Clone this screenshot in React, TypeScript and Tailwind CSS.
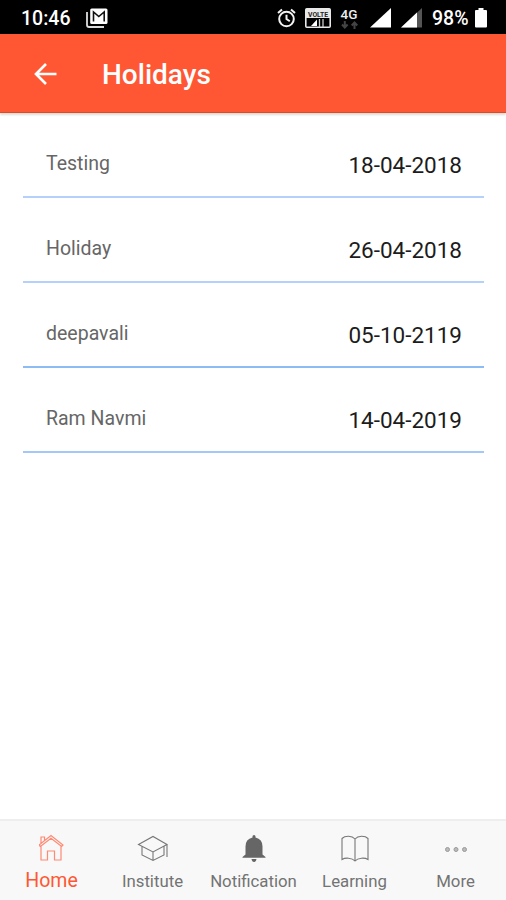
import React from 'react';

type Holiday = {
  name: string;
  date: string;
  line: string;
};

const holidays: Holiday[] = [
  { name: 'Testing', date: '18-04-2018', line: 'border-[#b5d0fa]' },
  { name: 'Holiday', date: '26-04-2018', line: 'border-[#b5d0fa]' },
  { name: 'deepavali', date: '05-10-2119', line: 'border-[#8dbcf5]' },
  { name: 'Ram Navmi', date: '14-04-2019', line: 'border-[#a3c8f8]' },
];

const StatusBar = () => {
  return (
    <div className="flex h-[34px] shrink-0 items-center bg-black pl-[21px] pr-[19px] pt-[1px] text-white">
      <span className="w-[65px] pt-[3px] text-[19.5px] font-medium leading-none">10:46</span>
      <svg className="h-[20px] w-[22px]" viewBox="0 0 22 20" fill="none">
        <path d="M1 4v13q0 2 2 2h15" stroke="#ddd" strokeWidth="1.8" />
        <rect x="4.2" y=".5" width="17.3" height="15.5" rx="1.5" fill="#fff" />
        <path d="M7.5 13.5V4l5.3 4.5L18.2 4v9.5" stroke="#111" strokeWidth="1.6" />
        <path d="M8.5 3h8.5l-4.2 3.2z" fill="#fff" />
      </svg>
      <div className="grow" />
      <svg className="mr-[9px] h-[20px] w-[19px]" viewBox="0 0 19 20" fill="none" stroke="#f3f3f3" strokeWidth="2">
        <circle cx="9.5" cy="11" r="7.3" />
        <path d="M9.5 6.7V11l3.3 2.3M1 5l4-3.5M18 5l-4-3.5" />
      </svg>
      <svg className="mr-[9px] h-[20px] w-[26px]" viewBox="0 0 26 20">
        <rect x=".8" y=".8" width="24.4" height="18.4" rx="1" fill="#000" stroke="#e8e8e8" strokeWidth="1.6" />
        <rect x="1" y="1" width="24" height="9" fill="#e8e8e8" />
        <text x="13" y="8.7" textAnchor="middle" fontSize="8" fontWeight="700" textLength="20" lengthAdjust="spacingAndGlyphs" fill="#222" fontFamily="Roboto">VOLTE</text>
        <path d="M6 18l6-6.5V18z" fill="#fff" />
        <path d="M14.5 11v8M18 11v8" stroke="#ccc" strokeWidth="1.3" />
      </svg>
      <div className="mr-[12px] flex h-[22px] w-[18px] flex-col items-center">
        <span className="text-[13.5px] font-medium leading-[14px] text-[#eee]">4G</span>
        <svg className="h-[8px] w-[17px]" viewBox="0 0 17 8">
          <path d="M3.8 0v6M1 3.5l2.8 3 2.8-3M13.5 8V2M10.7 4.5l2.8-3 2.8 3" stroke="#444" strokeWidth="2" fill="none" />
        </svg>
      </div>
      <svg className="mr-[10px] h-[20px] w-[21px]" viewBox="0 0 21 20">
        <path d="M0 19.5L21 0v19.5z" fill="#fff" />
      </svg>
      <svg className="mr-[10px] h-[20px] w-[21px]" viewBox="0 0 21 20">
        <path d="M0 19.5L21 0v19.5z" fill="#555" />
        <path d="M0 19.5L16 4.6v14.9z" fill="#fff" />
      </svg>
      <span className="w-[43px] pt-[3px] text-[19.5px] font-medium leading-none">98%</span>
      <svg className="h-[20px] w-[12px]" viewBox="0 0 12 20">
        <path d="M3.5 0h5v2H11q1 0 1 1v15.5q0 1-1 1H1q-1 0-1-1V3q0-1 1-1h2.5z" fill="#fff" />
      </svg>
    </div>
  );
};

const Header = () => {
  return (
    <header className="flex h-[79px] shrink-0 items-center border-b border-[#e04a22] bg-[#ff5733] pl-[34px] pt-[2px] text-white shadow-[0_2px_2px_rgba(0,0,0,0.14)]">
      <svg className="h-[22px] w-[23px]" viewBox="0 0 23 22" fill="none" stroke="currentColor" strokeWidth="2.6">
        <path d="M22.5 11H2.5M12 1L2 11l10 10" />
      </svg>
      <h1 className="ml-[45px] pt-[1px] text-[28px] font-medium leading-none">Holidays</h1>
    </header>
  );
};

const HolidayRow = ({ name, date, line }: Holiday) => {
  return (
    <li className={`flex h-[85px] items-center justify-between border-b-2 pl-[23px] pr-[22px] pt-[22px] ${line}`}>
      <span className="mb-[4px] text-[19.5px] text-[#666]">{name}</span>
      <span className="text-[22.5px] text-[#1c1c1c]">{date}</span>
    </li>
  );
};

const HomeIcon = () => (
  <svg className="h-[28px] w-[26px]" viewBox="0 0 26 28" fill="none" stroke="#ff8a74" strokeWidth="1.2">
    <path d="M0 11L12 1.5 24 11l-1.4 1.5L12 4.3 1.4 12.5zM2 9V3h3.5v3.5M2 12.5V26h6.5v-9h7v9H22V12.5" />
  </svg>
);

const InstituteIcon = () => (
  <svg className="h-[28px] w-[32px]" viewBox="0 0 32 28" fill="none" stroke="#777" strokeWidth="1.1">
    <path d="M1.5 10.5L16 2.5l14 8L16 18zM5 12.5V21l11 5.5L27 21v-8.5M16 18v8.5M30 10.5V23" />
  </svg>
);

const BellIcon = () => (
  <svg className="h-[28px] w-[24px]" viewBox="0 0 24 28" fill="#666">
    <path d="M10.5 2.5q0-1.5 1.5-1.5t1.5 1.5v1q7 1.5 7 9v8l3 2.5v.8H.5V23l3-2.500v-8q0-7.500 7-9zM9.500 25h5q-.5 3-2.500 3t-2.500-3z" />
  </svg>
);

const BookIcon = () => (
  <svg className="h-[28px] w-[28px]" viewBox="0 0 28 28" fill="none" stroke="#777" strokeWidth="1.1">
    <path d="M14 5v22M14 5C11 1.500 4 1.500 1 4.500v21c3-2 10-2 13 1.500 3-3.500 10-3.500 13-1.500v-21c-3-3-10-3-13 .500z" />
  </svg>
);

const MoreIcon = () => (
  <svg className="h-[28px] w-[24px]" viewBox="0 0 24 28" fill="#bbb" stroke="#999">
    <circle cx="3.5" cy="15.5" r="2" />
    <circle cx="12" cy="15.5" r="2" />
    <circle cx="20.5" cy="15.5" r="2" />
  </svg>
);

const tabs = [
  { label: 'Home', icon: <HomeIcon />, style: 'text-[19.5px] text-[#ff5733]' },
  { label: 'Institute', icon: <InstituteIcon />, style: 'text-[16.8px] text-[#737373]' },
  { label: 'Notification', icon: <BellIcon />, style: 'text-[16.8px] text-[#737373]' },
  { label: 'Learning', icon: <BookIcon />, style: 'text-[16.8px] text-[#737373]' },
  { label: 'More', icon: <MoreIcon />, style: 'text-[16.8px] text-[#737373]' },
];

const App = () => {
  return (
    <div className="flex h-screen w-full flex-col overflow-hidden bg-white font-['Roboto',sans-serif]">
      <StatusBar />
      <Header />
      <main className="grow pl-[23px] pr-[22px]">
        <ul>
          {holidays.map((holiday) => (
            <HolidayRow key={holiday.name} {...holiday} />
          ))}
        </ul>
      </main>
      <nav className="grid h-[81px] shrink-0 grid-cols-5 border-t-2 border-[#eeeeee] bg-[#f8f8f8] pl-[1px]">
        {tabs.map((tab) => (
          <div key={tab.label} className="flex flex-col items-center pt-[13px]">
            {tab.icon}
            <span className={`mt-[7px] leading-[24px] ${tab.style}`}>{tab.label}</span>
          </div>
        ))}
      </nav>
    </div>
  );
};

export default App;
